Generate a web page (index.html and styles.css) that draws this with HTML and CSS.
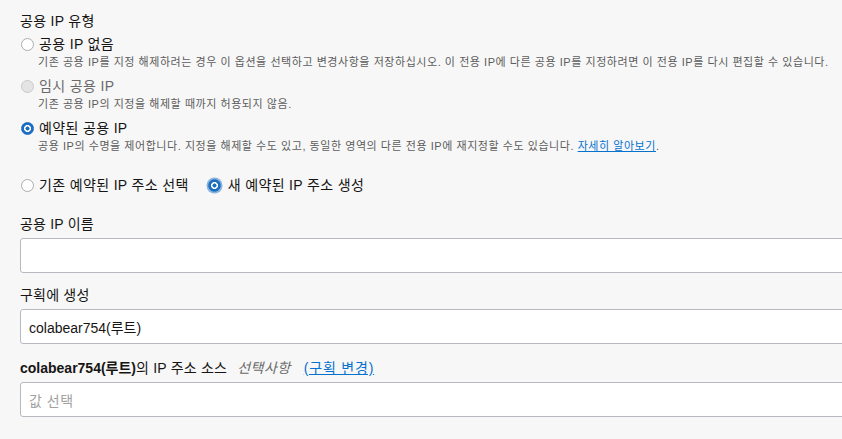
FILE: index.html
```html
<!DOCTYPE html>
<html lang="ko">
<head>
<meta charset="utf-8">
<link rel="stylesheet" href="styles.css">
</head>
<body>
<div class="form">
  <div class="group-title">공용 IP 유형</div>
  <div class="option">
    <div class="opt-row"><span class="radio"></span><span class="opt-label">공용 IP 없음</span></div>
    <div class="desc">기존 공용 IP를 지정 해제하려는 경우 이 옵션을 선택하고 변경사항을 저장하십시오. 이 전용 IP에 다른 공용 IP를 지정하려면 이 전용 IP를 다시 편집할 수 있습니다.</div>
  </div>
  <div class="option">
    <div class="opt-row"><span class="radio disabled"></span><span class="opt-label muted">임시 공용 IP</span></div>
    <div class="desc">기존 공용 IP의 지정을 해제할 때까지 허용되지 않음.</div>
  </div>
  <div class="option">
    <div class="opt-row"><span class="radio checked"></span><span class="opt-label">예약된 공용 IP</span></div>
    <div class="desc">공용 IP의 수명을 제어합니다. 지정을 해제할 수도 있고, 동일한 영역의 다른 전용 IP에 재지정할 수도 있습니다. <a class="link" href="#">자세히 알아보기</a>.</div>
  </div>
  <div class="inline-radios">
    <div class="opt-row"><span class="radio"></span><span class="opt-label">기존 예약된 IP 주소 선택</span></div>
    <div class="opt-row"><span class="radio checked focus"></span><span class="opt-label">새 예약된 IP 주소 생성</span></div>
  </div>
  <div class="field first">
    <div class="field-label">공용 IP 이름</div>
    <div class="input"></div>
  </div>
  <div class="field">
    <div class="field-label">구획에 생성</div>
    <div class="input"><span class="value">colabear754(루트)</span></div>
  </div>
  <div class="field last">
    <div class="field-label"><b>colabear754(루트)</b>의 IP 주소 소스 <i class="optional">선택사항</i> <a class="link" href="#">(구획 변경)</a></div>
    <div class="input"><span class="placeholder">값 선택</span></div>
  </div>
</div>
</body>
</html>
```

FILE: styles.css
```css
html, body {
  margin: 0;
  padding: 0;
  background: #f7f7f7;
  overflow: hidden;
}
body {
  font-family: "Liberation Sans", "Noto Sans CJK KR", sans-serif;
  color: #161513;
  width: 842px;
  height: 439px;
}
.form {
  padding: 12px 0 0 20px;
  width: 850px;
}
.group-title {
  font-size: 14px;
  line-height: 18px;
  letter-spacing: 0.3px;
}
.option {
  margin-top: 4px;
}
.option + .option {
  margin-top: 6px;
}
.opt-row {
  display: flex;
  align-items: center;
  height: 20px;
}
.radio {
  width: 11px;
  height: 11px;
  border-radius: 50%;
  border: 1px solid #a9adb2;
  background: #fff;
  box-sizing: content-box;
  flex: none;
  margin-right: 5px;
  margin-left: 1px;
}
.radio.disabled {
  background: #e4e4e4;
  border-color: #c9c9c9;
}
.radio.checked {
  border: 1px solid #1b6ec2;
  background: radial-gradient(circle, #1b6ec2 0 1.8px, #fff 2.3px 3.2px, #1b6ec2 3.8px);
}
.radio.focus {
  box-shadow: 0 0 0 1.5px rgba(27, 110, 194, 0.5);
  margin-right: 7px;
}
.opt-label {
  font-size: 14px;
  line-height: 20px;
  letter-spacing: 0.35px;
}
.opt-label.muted {
  color: #6a6a6a;
}
.desc {
  font-size: 11px;
  line-height: 16px;
  color: #5c5c5c;
  padding-left: 18px;
  margin-top: 0;
  white-space: nowrap;
  letter-spacing: 0.55px;
}
.link {
  color: #0572ce;
  text-decoration: underline;
}
.inline-radios {
  display: flex;
  gap: 18px;
  margin-top: 21px;
}
.field {
  margin-top: 12px;
}
.field.first {
  margin-top: 19px;
}
.field.last {
  margin-top: 14px;
}
.field-label {
  font-size: 14px;
  line-height: 20px;
  margin-bottom: 4px;
  letter-spacing: 0.2px;
}
.field-label b {
  font-weight: bold;
  letter-spacing: 0;
}
.optional {
  color: #6a6a6a;
  margin-left: 6px;
  margin-right: 9px;
  letter-spacing: 0.5px;
}
.field-label .link {
  letter-spacing: 0.8px;
}
.input {
  height: 33px;
  border: 1px solid #b6bac0;
  border-radius: 3px;
  background: #fff;
  box-sizing: content-box;
  width: 840px;
  display: flex;
  align-items: center;
  padding-left: 8px;
  font-size: 14px;
}
.placeholder {
  color: #a2a2a2;
  letter-spacing: 0.5px;
}
```
